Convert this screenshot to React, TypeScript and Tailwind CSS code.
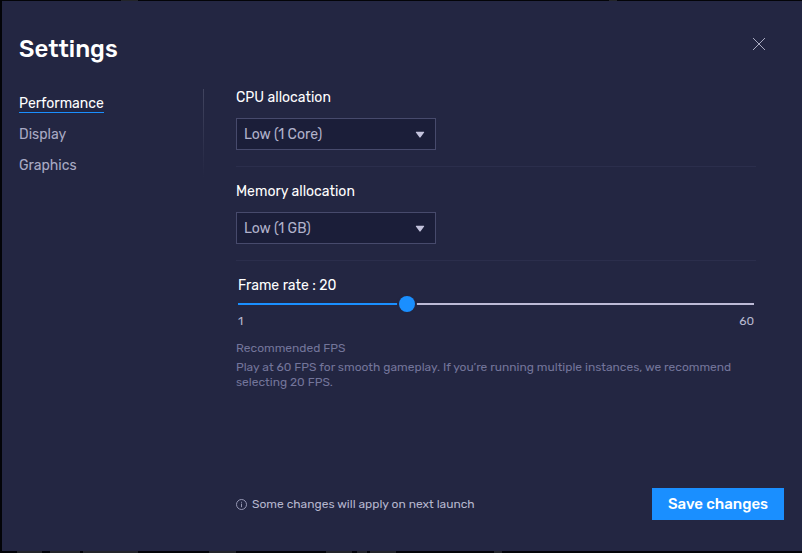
import { useState } from "react";
import type { CSSProperties, ReactNode } from "react";

const tabs = ["Performance", "Display", "Graphics"];

function Choice({ id, label, options }: { id: string; label: string; options: string[] }) {
  return (
    <section className="mb-[14px] border-b border-[#2b2e4c] pb-4">
      <label htmlFor={id} className="block text-sm leading-[22px] text-white">
        {label}
      </label>
      <div className="relative mt-[9px] w-[200px]">
        <select
          id={id}
          className="block h-8 w-full appearance-none rounded-none border border-[#474a6c] bg-[#1b1e39] pl-[7px] pr-8 pt-0.5 text-sm text-[#b1b2cb] outline-none"
        >
          {options.map((o) => (
            <option key={o}>{o}</option>
          ))}
        </select>
        <svg
          className="pointer-events-none absolute right-[11px] top-[13px] h-[7px] w-[10px]"
          viewBox="0 0 10 7"
          fill="#c3c2dc"
          aria-hidden="true"
        >
          <path d="M1.2 .8h7.6q.6 0 .3.6L5.6 6.3q-.6.7-1.2 0L.9 1.4q-.3-.6.3-.6z" />
        </svg>
      </div>
    </section>
  );
}

function Note({ children }: { children: ReactNode }) {
  return (
    <p className="flex items-center gap-[5px] text-xs leading-4 text-[#b5b6ce]">
      <svg className="size-[11px]" viewBox="0 0 11 11" fill="none" stroke="#a3a4c0" strokeWidth=".9" aria-hidden="true">
        <circle cx="5.5" cy="5.5" r="5" />
        <path d="M5.5 4.6v3.6M5.5 2.8v.9" />
      </svg>
      {children}
    </p>
  );
}

export default function App() {
  const [active, setActive] = useState("Performance");
  const [rate, setRate] = useState(20);
  const fill = { "--fill": `${((rate - 1) / 59) * 100}%` } as CSSProperties;

  return (
    <div className="flex min-h-screen flex-col bg-[#030408] pl-0.5 font-[Rubik,sans-serif]">
      <div className="flex h-px pl-[119px]">
        <span className="w-[17px] bg-[#23252a]" />
        <span className="ml-[471px] w-2 bg-[#23252a]" />
      </div>
      <main className="flex grow flex-col bg-[#232642] pb-[31px] pl-[17px] pr-[18px] pt-8">
        <header className="flex items-start justify-between pr-[18px]">
          <h1 className="text-2xl font-medium leading-8 text-white">Settings</h1>
          <button type="button" aria-label="Close" className="mt-1 cursor-pointer">
            <svg className="size-[14px]" viewBox="0 0 14 14" stroke="#b9bad0" strokeWidth=".9" aria-hidden="true">
              <path d="M1 1l12 12M13 1L1 13" />
            </svg>
          </button>
        </header>

        <div className="mt-[22px] flex grow">
          <nav className="flex w-[184px] shrink-0 flex-col items-start gap-[13px] pt-2">
            {tabs.map((t) => (
              <button
                key={t}
                type="button"
                onClick={() => setActive(t)}
                className={
                  t === active
                    ? "cursor-pointer border-b border-[#1a8fff] text-sm leading-[17px] text-white"
                    : "cursor-pointer border-b border-transparent text-sm leading-[17px] text-[#a9aac4]"
                }
              >
                {t}
              </button>
            ))}
          </nav>
          <div className="mt-0.5 h-[88px] w-px shrink-0 bg-linear-to-b from-[#41445f] to-[#232642]" />

          <div className="ml-8 flex grow flex-col">
            <div className="mr-7">
              <Choice id="cpu" label="CPU allocation" options={["Low (1 Core)", "Medium (2 Cores)", "High (4 Cores)"]} />
              <Choice id="memory" label="Memory allocation" options={["Low (1 GB)", "Medium (2 GB)", "High (4 GB)"]} />

              <section>
                <div className="px-0.5">
                  <label htmlFor="rate" className="block text-sm leading-[22px] text-white">
                    Frame rate : {rate}
                  </label>
                  <input
                    id="rate"
                    type="range"
                    min={1}
                    max={60}
                    value={rate}
                    onChange={(e) => setRate(Number(e.target.value))}
                    style={fill}
                    className="block h-[14px] w-full cursor-pointer appearance-none bg-transparent outline-none [&::-webkit-slider-runnable-track]:h-0.5 [&::-webkit-slider-runnable-track]:bg-[linear-gradient(to_right,#1a8fff_var(--fill),#bcbad6_var(--fill))] [&::-webkit-slider-thumb]:-mt-[7px] [&::-webkit-slider-thumb]:size-4 [&::-webkit-slider-thumb]:appearance-none [&::-webkit-slider-thumb]:rounded-full [&::-webkit-slider-thumb]:bg-[#1a8fff] [&::-webkit-slider-thumb]:shadow-[0_0_0_2px_#232642]"
                  />
                  <div className="mt-0.5 flex justify-between text-xs leading-4 text-[#b5b6ce]">
                    <span>1</span>
                    <span>60</span>
                  </div>
                </div>
                <h2 className="mt-[11px] text-xs leading-4 text-[#73759a]">Recommended FPS</h2>
                <p className="mt-1 text-xs leading-[15px] text-[#73759a]">
                  Play at 60 FPS for smooth gameplay. If you’re running multiple instances, we recommend selecting 20 FPS.
                </p>
              </section>
            </div>

            <footer className="mt-auto flex items-center justify-between">
              <Note>Some changes will apply on next launch</Note>
              <button type="button" className="h-8 w-[132px] cursor-pointer bg-[#1a8fff] text-[15px] font-medium text-white">
                Save changes
              </button>
            </footer>
          </div>
        </div>
      </main>
      <div className="flex h-0.5 pl-[15px]">
        <span className="w-[25px] bg-[#23252a]" />
        <span className="ml-2 w-[30px] bg-[#23252a]" />
        <span className="ml-[3px] w-[55px] bg-[#23252a]" />
        <span className="ml-[71px] w-[27px] bg-[#23252a]" />
        <span className="ml-[90px] w-[26px] bg-[#23252a]" />
        <span className="ml-[5px] w-[10px] bg-[#23252a]" />
        <span className="ml-[3px] w-[26px] bg-[#23252a]" />
        <span className="ml-[98px] w-2 bg-[#23252a]" />
      </div>
    </div>
  );
}
